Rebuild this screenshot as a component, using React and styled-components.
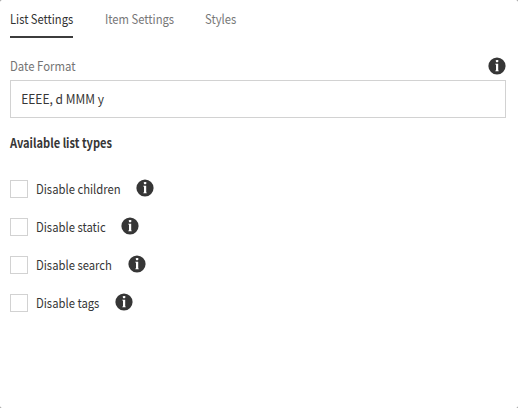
import React from 'react';
import styled, { createGlobalStyle } from 'styled-components';

const GlobalStyle = createGlobalStyle`
  * { box-sizing: border-box; }
  body {
    margin: 0;
    background: #8a8a8a;
    font-family: "Noto Sans CJK SC", "Noto Sans", sans-serif;
    font-size: 13px;
    line-height: 18px;
    color: #363636;
  }
`;

const Dialog = styled.main`
  width: 518px;
  height: 408px;
  padding: 10px 12px 0 10px;
  background: #fff;
  border-radius: 2px;
`;

/* Narrows the typeface to a semi-condensed width. */
const Condensed = styled.span`
  display: inline-block;
  white-space: nowrap;
  transform: scaleX(${(p) => p.$scale || 0.867});
  transform-origin: left center;
`;

const TabList = styled.nav`
  display: flex;
  gap: 32px;
  height: 28px;
`;

const Tab = styled.button`
  width: ${(p) => p.$width}px;
  height: 28px;
  padding: 0 0 8px;
  border: 0;
  border-bottom: 2px solid ${(p) => (p.$active ? '#3c3c3c' : 'transparent')};
  background: none;
  font: inherit;
  text-align: left;
  white-space: nowrap;
  color: ${(p) => (p.$active ? '#323232' : '#777')};
`;

const FieldHeader = styled.div`
  display: flex;
  justify-content: space-between;
  height: 23px;
  margin-top: 19px;
`;

const FieldLabel = styled.label`
  color: #747474;
`;

const InputFrame = styled.div`
  height: 38px;
  border: 1px solid #d2d2d2;
  background: #fff;
  overflow: hidden;
`;

const DateInput = styled.input`
  display: block;
  width: 100%;
  height: 36px;
  padding: 0 11px 1px;
  border: 0;
  outline: 0;
  background: transparent;
  font: inherit;
  color: #363636;
  transform: scaleX(0.925);
  transform-origin: left center;
`;

const Heading = styled.h3`
  margin: 16px 0 28px;
  font-size: 13px;
  line-height: 18px;
  font-weight: 700;
`;

const Options = styled.div`
  display: flex;
  flex-direction: column;
  gap: 20px;
`;

const Option = styled.div`
  display: flex;
  height: 18px;
`;

const Checkbox = styled.input`
  appearance: none;
  width: 18px;
  height: 18px;
  margin: 0 8px 0 0;
  border: 1px solid #d2d2d2;
  background: #fff;
`;

const OptionLabel = styled.label`
  width: ${(p) => p.$width}px;
  white-space: nowrap;
`;

const Icon = styled.svg`
  display: block;
  flex: none;
  width: 18px;
  height: 18px;
  margin-top: ${(p) => p.$top}px;
`;

function InfoIcon({ top = -1 }) {
  return (
    <Icon viewBox="0 0 18 18" $top={top} aria-label="Information">
      <circle cx="9" cy="9" r="8.6" fill="#363636" />
      <rect x="7.9" y="2.9" width="2.4" height="2.4" rx="0.7" fill="#fff" />
      <path d="M7.2 6.8h3v6.8h.5v.6H7.3v-.6H8V7.5h-.8z" fill="#fff" />
    </Icon>
  );
}

const options = [
  { label: 'Disable children', width: 100.3 },
  { label: 'Disable static', width: 84.8 },
  { label: 'Disable search', width: 92 },
  { label: 'Disable tags', width: 79.3 },
];

export default function App() {
  return (
    <>
      <GlobalStyle />
      <Dialog>
        <TabList>
          <Tab $active $width={63}><Condensed $scale={0.86}>List Settings</Condensed></Tab>
          <Tab $width={68}><Condensed $scale={0.865}>Item Settings</Condensed></Tab>
          <Tab $width={32}><Condensed>Styles</Condensed></Tab>
        </TabList>
        <FieldHeader>
          <FieldLabel htmlFor="date-format"><Condensed $scale={0.875}>Date Format</Condensed></FieldLabel>
          <InfoIcon top={0} />
        </FieldHeader>
        <InputFrame>
          <DateInput id="date-format" defaultValue="EEEE, d MMM y" />
        </InputFrame>
        <Heading><Condensed $scale={0.853}>Available list types</Condensed></Heading>
        <Options>
          {options.map((o) => (
            <Option key={o.label}>
              <Checkbox type="checkbox" id={o.label} />
              <OptionLabel htmlFor={o.label} $width={o.width}>
                <Condensed>{o.label}</Condensed>
              </OptionLabel>
              <InfoIcon />
            </Option>
          ))}
        </Options>
      </Dialog>
    </>
  );
}
